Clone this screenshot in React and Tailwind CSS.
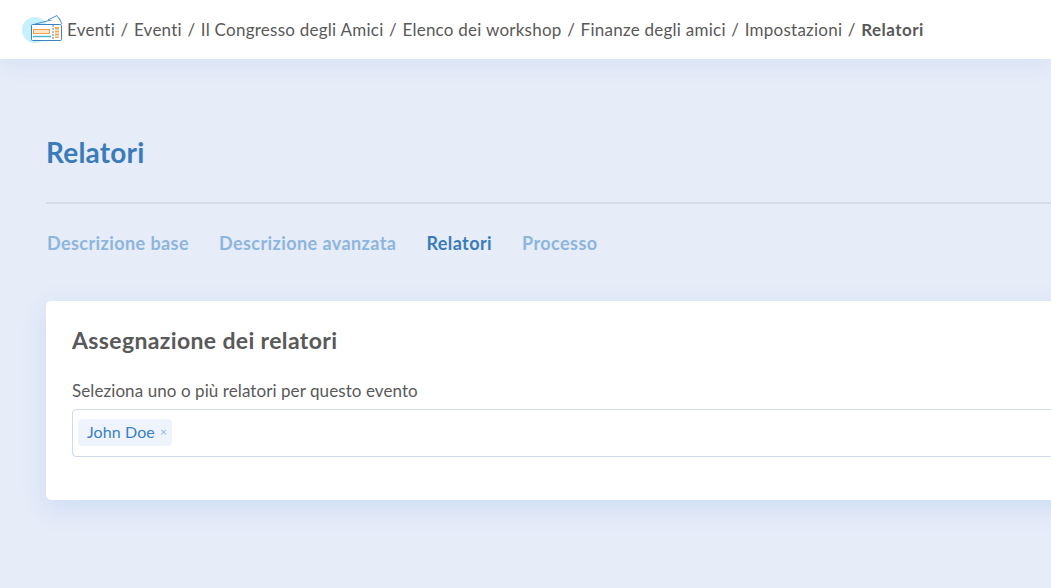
import React from 'react';

const crumbs = ['Eventi', 'Eventi', 'Il Congresso degli Amici', 'Elenco dei workshop', 'Finanze degli amici', 'Impostazioni'];
const tabs = ['Descrizione base', 'Descrizione avanzata', 'Relatori', 'Processo'];

const Logo = () => (
  <svg width="42" height="30" viewBox="0 0 42 30" className="shrink-0">
    <circle cx="14" cy="15" r="13" fill="#c6f1fc" />
    <path d="M12.5 9.5 L38 3 L41 9" fill="none" stroke="#4a90cf" strokeWidth="1" />
    <path d="M27 5 L36 0.5 L39 5" fill="#fff" stroke="#4a90cf" strokeWidth="1" />
    <rect x="10.5" y="9.5" width="30" height="16" rx="1" fill="#fff" stroke="#3b82c4" strokeWidth="1" />
    <line x1="32" y1="10" x2="32" y2="25" stroke="#3b82c4" strokeWidth="1" strokeDasharray="2 1" />
    <rect x="12.5" y="14.5" width="16" height="4" fill="#fde7c8" stroke="#f0a04b" strokeWidth="1" />
    <line x1="12" y1="21.5" x2="30" y2="21.5" stroke="#45b6d8" strokeWidth="1.5" />
    <rect x="34" y="12" width="4" height="11" fill="#f7a649" />
    <line x1="34" y1="15" x2="38" y2="15" stroke="#fff" strokeWidth="1" />
    <line x1="34" y1="18" x2="38" y2="18" stroke="#fff" strokeWidth="1" />
    <line x1="34" y1="21" x2="38" y2="21" stroke="#fff" strokeWidth="1" />
  </svg>
);

export default function App() {
  return (
    <div className="h-[588px] w-[1051px] overflow-hidden bg-[#e6ecf8] font-['Lato','Noto_Sans',sans-serif] text-[#595959]">
      <header className="flex h-[59px] items-center bg-white pl-[21px] shadow-[0_6px_20px_rgba(160,190,235,0.2)]">
        <Logo />
        <nav className="ml-[4px] flex items-center whitespace-nowrap text-[17px] tracking-[0.25px]">
          {crumbs.map((c, i) => (
            <React.Fragment key={i}>
              <span>{c}</span>
              <span className="mx-[5.5px]">/</span>
            </React.Fragment>
          ))}
          <span className="font-bold tracking-[0.45px]">Relatori</span>
        </nav>
      </header>

      <main className="ml-[46px] w-[1100px]">
        <h1 className="mt-[74px] text-[28px] font-bold leading-[38px] tracking-[0.2px] text-[#3a7cba]">Relatori</h1>
        <div className="mt-[31px] h-[2px] bg-[#d5dcea]" />
        <div className="mt-[27px] flex gap-[30px] pl-px text-[18px] font-bold leading-[24px] tracking-[0.42px] text-[#8db5de]">
          {tabs.map(t => (
            <span key={t} className={t === 'Relatori' ? 'text-[#3a7cba]' : ''}>{t}</span>
          ))}
        </div>
        <section className="mt-[46px] h-[199px] rounded-[5px] bg-white px-[26px] pt-[24px] shadow-[0_8px_24px_rgba(150,185,240,0.3)]">
          <h2 className="text-[23px] font-bold leading-[30px] tracking-[0.36px]">Assegnazione dei relatori</h2>
          <label className="mt-[26px] block text-[17px] leading-[20px] tracking-[0.08px]">Seleziona uno o più relatori per questo evento</label>
          <div className="mt-[8px] flex h-[48px] items-center rounded-[4px] border border-[#cfdbe9] bg-white pl-[5px]">
            <span className="-mt-[2px] flex h-[27px] items-center rounded-[4px] bg-[#eff4fc] pl-[9px] pr-[5px] text-[16px] tracking-[0.1px] text-[#3a80c4]">
              John Doe
              <span className="ml-[5px] text-[12px] text-[#8db5de]">×</span>
            </span>
          </div>
        </section>
      </main>
    </div>
  );
}
